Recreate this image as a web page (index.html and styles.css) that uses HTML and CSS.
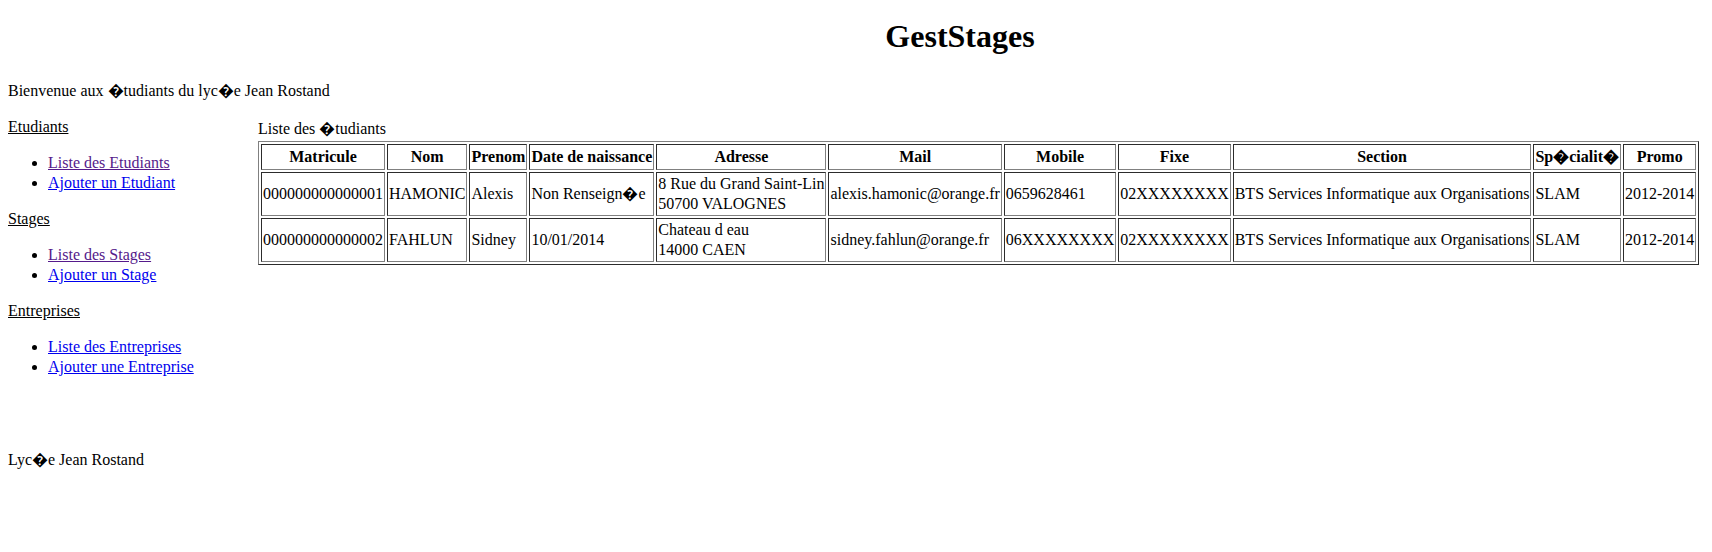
FILE: index.html
```html
<!DOCTYPE html>
<html lang="fr">
<head>
<meta charset="utf-8">
<title>GestStages</title>
<link rel="stylesheet" href="styles.css">
</head>
<body>
<header class="header">
  <h1 class="title">GestStages</h1>
  <p class="welcome">Bienvenue aux �tudiants du lyc�e Jean Rostand</p>
</header>
<div class="main">
  <nav class="nav">
    <p class="nav-title">Etudiants</p>
    <ul class="nav-list">
      <li><a class="link visited" href="#">Liste des Etudiants</a></li>
      <li><a class="link" href="#">Ajouter un Etudiant</a></li>
    </ul>
    <p class="nav-title">Stages</p>
    <ul class="nav-list">
      <li><a class="link visited" href="#">Liste des Stages</a></li>
      <li><a class="link" href="#">Ajouter un Stage</a></li>
    </ul>
    <p class="nav-title">Entreprises</p>
    <ul class="nav-list">
      <li><a class="link" href="#">Liste des Entreprises</a></li>
      <li><a class="link" href="#">Ajouter une Entreprise</a></li>
    </ul>
  </nav>
  <section class="content">
    <div class="caption">Liste des �tudiants</div>
    <table class="grid">
      <thead>
        <tr>
          <th>Matricule</th>
          <th>Nom</th>
          <th>Prenom</th>
          <th>Date de naissance</th>
          <th>Adresse</th>
          <th>Mail</th>
          <th>Mobile</th>
          <th>Fixe</th>
          <th>Section</th>
          <th>Sp�cialit�</th>
          <th>Promo</th>
        </tr>
      </thead>
      <tbody>
        <tr>
          <td>000000000000001</td>
          <td>HAMONIC</td>
          <td>Alexis</td>
          <td>Non Renseign�e</td>
          <td>8 Rue du Grand Saint-Lin<br>50700 VALOGNES</td>
          <td>alexis.hamonic@orange.fr</td>
          <td>0659628461</td>
          <td>02XXXXXXXX</td>
          <td>BTS Services Informatique aux Organisations</td>
          <td>SLAM</td>
          <td>2012-2014</td>
        </tr>
        <tr>
          <td>000000000000002</td>
          <td>FAHLUN</td>
          <td>Sidney</td>
          <td>10/01/2014</td>
          <td>Chateau d eau<br>14000 CAEN</td>
          <td>sidney.fahlun@orange.fr</td>
          <td>06XXXXXXXX</td>
          <td>02XXXXXXXX</td>
          <td>BTS Services Informatique aux Organisations</td>
          <td>SLAM</td>
          <td>2012-2014</td>
        </tr>
      </tbody>
    </table>
  </section>
</div>
<footer class="footer">Lyc�e Jean Rostand</footer>
</body>
</html>
```
FILE: styles.css
```css
html {
  background: #ffffff;
}

body {
  margin: 8px;
  font-family: "Liberation Serif", "Times New Roman", serif;
  font-size: 16px;
  color: #000000;
  background: #ffffff;
}

.title {
  margin: 10px 0 26px;
  padding-left: 208px;
  font-size: 32px;
  font-weight: bold;
  line-height: 37px;
  text-align: center;
}

.welcome {
  margin: 0;
  line-height: 20px;
}

.main {
  display: flex;
  align-items: flex-start;
  margin-top: 16px;
}

.nav {
  flex: none;
  width: 250px;
}

.nav-title {
  margin: 0;
  line-height: 20px;
  text-decoration: underline;
}

.nav-list {
  margin: 16px 0;
  padding-left: 40px;
  line-height: 20px;
}

.link {
  color: #0000ee;
  text-decoration: underline;
}

.link.visited {
  color: #551a8b;
}

.content {
  flex: none;
}

.caption {
  line-height: 24px;
}

.grid {
  border-collapse: separate;
  border-spacing: 2px;
  border: 1px outset #808080;
}

.grid th,
.grid td {
  border: 1px inset #808080;
  padding: 1px;
  vertical-align: middle;
}

.grid th {
  font-weight: bold;
  text-align: center;
  line-height: 22px;
}

.grid td {
  text-align: left;
  line-height: 20px;
}

.footer {
  margin-top: 57px;
  line-height: 20px;
}
```
